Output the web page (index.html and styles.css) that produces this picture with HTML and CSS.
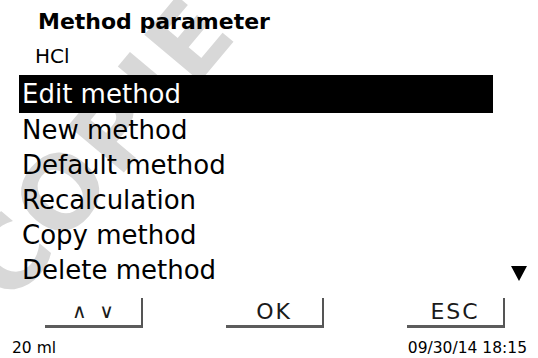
FILE: index.html
```html
<html>
  <head>
    <title>Method parameter</title>
    <link rel="stylesheet" href="styles.css">
  </head>
  <body>
    <div class="screen">
      <div class="watermark">COPIE</div>

      <div class="head">
        <h1 class="title">Method parameter</h1>
        <div class="subtitle">HCl</div>
      </div>

      <div class="list-area">
        <ul class="menu">
          <li class="item selected">Edit method</li>
          <li class="item">New method</li>
          <li class="item">Default method</li>
          <li class="item">Recalculation</li>
          <li class="item">Copy method</li>
          <li class="item">Delete method</li>
        </ul>
        <svg class="more" width="16" height="15" viewBox="0 0 16 15">
          <polygon points="0,0 16,0 8,15" fill="#000" />
        </svg>
      </div>

      <div class="softkeys">
        <div class="key key-arrows">&#8743;&nbsp;&nbsp;&#8744;</div>
        <div class="key">OK</div>
        <div class="key">ESC</div>
      </div>

      <div class="status">
        <span>20 ml</span>
        <span>09/30/14 18:15</span>
      </div>
    </div>
  </body>
</html>
```

FILE: styles.css
```css
body {
  margin: 0;
  background: #fff;
}

.screen {
  position: relative;
  width: 538px;
  height: 358px;
  overflow: hidden;
  font-family: "DejaVu Sans", Verdana, sans-serif;
  color: #000;
  background: #fff;
}

/* faint diagonal stamp behind the content */
.watermark {
  position: absolute;
  left: -15px;
  top: 235px;
  font-family: "DejaVu Sans", sans-serif;
  font-weight: bold;
  font-size: 100px;
  line-height: 1;
  letter-spacing: 4px;
  color: #d8d8d8;
  white-space: nowrap;
  transform-origin: 0 50px;
  transform: rotate(-50deg);
}

.head {
  position: relative;
  padding-top: 9px;
}

.title {
  margin: 0;
  padding-left: 38px;
  font-size: 22px;
  line-height: 26px;
  font-weight: bold;
}

.subtitle {
  margin-top: 9px;
  padding-left: 35px;
  font-size: 20px;
  line-height: 24px;
}

.list-area {
  position: relative;
  display: grid;
  grid-template-columns: 474px 1fr;
  margin: 7px 0 0 19px;
}

.menu {
  list-style: none;
  margin: 0;
  padding: 0;
}

.item {
  height: 35px;
  padding-left: 3px;
  font-size: 26px;
  line-height: 35px;
  white-space: nowrap;
}

.item.selected {
  height: 38px;
  line-height: 38px;
  background: #000;
  color: #fff;
}

.more {
  align-self: end;
  justify-self: end;
  margin: 0 11px 7px 0;
}

.softkeys {
  position: relative;
  display: flex;
  gap: 83px;
  margin: 10px 0 0 45px;
}

.key {
  width: 96px;
  height: 27px;
  border-right: 2px solid #555;
  border-bottom: 3px solid #5c5c5c;
  text-align: center;
  font-size: 22px;
  line-height: 27px;
  letter-spacing: 2px;
  color: #1a1a1a;
}

.key-arrows {
  font-size: 20px;
  letter-spacing: 0;
}

.status {
  position: relative;
  display: flex;
  justify-content: space-between;
  margin-top: 11px;
  padding: 0 11px 0 12px;
  font-size: 15.5px;
  line-height: 18px;
}
```
